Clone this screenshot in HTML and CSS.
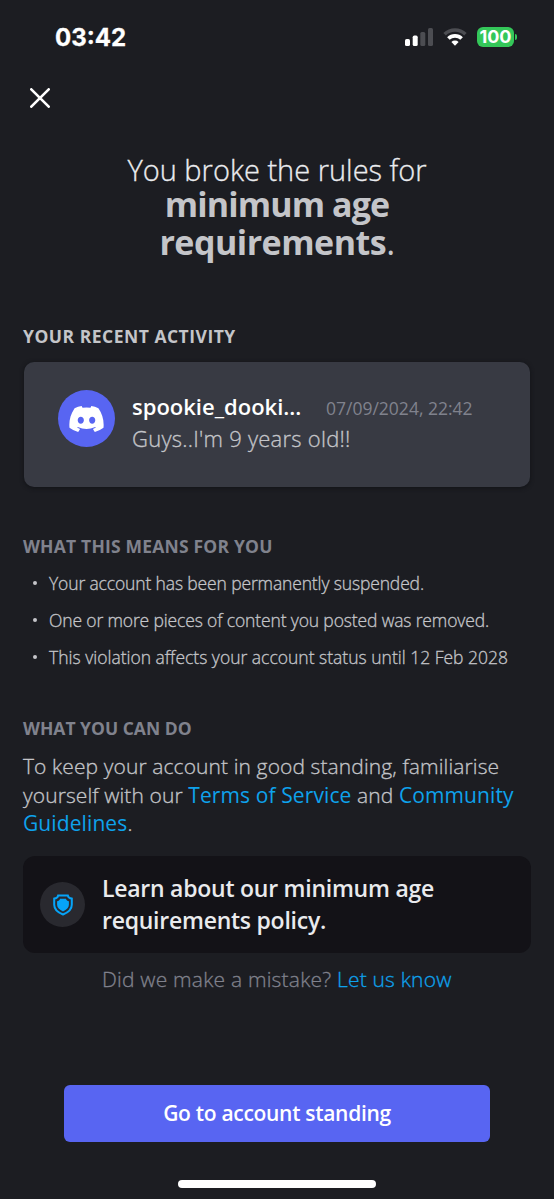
FILE: index.html
```html
<!DOCTYPE html>
<html lang="en">
<head>
    <meta charset="UTF-8">
    <title>Account standing</title>
    <link rel="stylesheet" href="styles.css">
</head>
<body>
<div class="status-bar">
    <span class="time">03:42</span>
    <div class="status-icons">
        <svg class="signal" width="28" height="18" viewBox="0 0 28 18">
            <rect x="0" y="11" width="5" height="7" rx="1.6" fill="#fff"/>
            <rect x="7.7" y="7.6" width="5" height="10.4" rx="1.6" fill="#fff"/>
            <rect x="15.3" y="4" width="5" height="14" rx="1.6" fill="#4c4d52"/>
            <rect x="23" y="0" width="5" height="18" rx="1.6" fill="#4c4d52"/>
        </svg>
        <svg class="wifi" width="24" height="18" viewBox="0 0 24 18">
            <path d="M1.6 6.3a14.8 14.8 0 0 1 20.8 0" fill="none" stroke="#4c4d52" stroke-width="3.6"/>
            <path d="M5.4 10.6a9.3 9.3 0 0 1 13.2 0" fill="none" stroke="#fff" stroke-width="3.6"/>
            <path d="M12 17.8l-3.6-3.7a5.1 5.1 0 0 1 7.2 0z" fill="#fff"/>
        </svg>
        <div class="battery">
            <span class="battery-level">100</span>
            <span class="battery-tip"></span>
        </div>
    </div>
</div>

<div class="nav">
    <svg class="close" width="20" height="20" viewBox="0 0 20 20">
        <path d="M1.3 1.3l17.4 17.4M18.7 1.3L1.3 18.7" stroke="#fff" stroke-width="2.6" stroke-linecap="round"/>
    </svg>
</div>

<div class="content">
    <h1 class="title">
        <span class="title-line">You broke the rules for</span>
        <b class="title-age">minimum age</b>
        <b class="title-req">requirements<i>.</i></b>
    </h1>

    <h2 class="label label-activity">YOUR RECENT ACTIVITY</h2>
    <div class="message">
        <div class="avatar">
            <svg width="35" height="26" viewBox="0 0 127.14 96.36">
                <path fill="#fff" d="M107.7 8.07A105.15 105.15 0 0 0 81.47 0a72.06 72.06 0 0 0-3.36 6.83 97.68 97.68 0 0 0-29.11 0A72.37 72.37 0 0 0 45.64 0a105.89 105.89 0 0 0-26.25 8.09C2.79 32.65-1.71 56.6.54 80.21a105.73 105.73 0 0 0 32.17 16.15 77.7 77.7 0 0 0 6.89-11.11 68.42 68.42 0 0 1-10.85-5.18c.91-.66 1.8-1.34 2.66-2a75.57 75.57 0 0 0 64.32 0c.87.71 1.76 1.39 2.66 2a68.68 68.68 0 0 1-10.87 5.19 77 77 0 0 0 6.89 11.1 105.25 105.25 0 0 0 32.19-16.14c2.64-27.38-4.51-51.11-18.9-72.15zM42.45 65.69C36.18 65.69 31 60 31 53s5-12.74 11.43-12.74S54 46 53.89 53s-5.05 12.69-11.44 12.69zm42.24 0C78.41 65.69 73.25 60 73.25 53s5-12.74 11.44-12.74S96.23 46 96.12 53s-5.04 12.69-11.43 12.69z"/>
            </svg>
        </div>
        <div class="message-body">
            <div class="message-head">
                <span class="username">spookie_dooki...</span>
                <span class="date">07/09/2024, 22:42</span>
            </div>
            <p class="message-text">Guys..I'm 9 years old!!</p>
        </div>
    </div>

    <h2 class="label label-means">WHAT THIS MEANS FOR YOU</h2>
    <ul class="effects">
        <li>Your account has been permanently suspended.</li>
        <li>One or more pieces of content you posted was removed.</li>
        <li class="until">This violation affects your account status until 12 Feb 2028</li>
    </ul>

    <h2 class="label">WHAT YOU CAN DO</h2>
    <p class="advice">To keep your account in good standing, familiarise<br>
        yourself with our <a>Terms of Service</a> and <a>Community<br>
        Guidelines</a>.</p>

    <div class="policy">
        <div class="policy-icon">
            <svg width="22" height="22" viewBox="0 0 22 22">
                <path d="M6.2 1.4h9.6c.3 1.9 1.7 3 4 3.2v6.2c0 4.4-3.6 7.7-8.8 9.7C5.8 18.5 2.2 15.2 2.2 10.8V4.6c2.3-.2 3.700-1.300 4-3.200z" fill="none" stroke="#06a4f8" stroke-width="2"/>
                <path d="M8.1 4.8h5.8c.6 1.4 1.5 2.2 3 2.5v3.5c0 3-2.3 5-5.9 6.6-3.6-1.6-5.9-3.6-5.9-6.6V7.3c1.5-.3 2.4-1.1 3-2.5z" fill="#06a4f8"/>
            </svg>
        </div>
        <p class="policy-text">Learn about our minimum age<br>requirements policy.</p>
    </div>
    <p class="mistake">Did we make a mistake? <a>Let us know</a></p>
</div>

<button class="standing">Go to account standing</button>
<div class="home-bar"></div>
</body>
</html>
```

FILE: styles.css
```css
* {
    box-sizing: border-box;
    margin: 0;
    padding: 0;
}

body {
    display: flex;
    flex-direction: column;
    height: 1199px;
    background-color: #1c1d22;
    color: #c4c5c9;
    font-family: "Open Sans", "Noto Sans", sans-serif;
    font-weight: 300;
    white-space: nowrap;
    overflow: hidden;
}

a {
    color: #0ea2ec;
}

/* a little heavier than the light weight */
.title-line,
.message-text,
.effects,
.advice,
.mistake {
    -webkit-text-stroke: 0.3px;
}

/* status bar */
.status-bar {
    display: flex;
    justify-content: space-between;
    align-items: center;
    height: 74px;
    padding: 0 37px 0 55px;
}

.time {
    font-family: Inter, sans-serif;
    font-size: 24px;
    font-weight: 700;
    color: #fff;
    -webkit-text-stroke: 0.3px;
}

.status-icons {
    display: flex;
    align-items: center;
}

.wifi {
    margin: 0 10px 0 10px;
}

.battery {
    display: flex;
    align-items: center;
}

.battery-level {
    width: 37px;
    height: 20px;
    border-radius: 6px;
    background-color: #34c759;
    color: #fff;
    font-family: Inter, sans-serif;
    font-size: 18px;
    font-weight: 700;
    line-height: 20px;
    text-align: center;
}

.battery-tip {
    width: 2px;
    height: 6px;
    margin-left: 1px;
    border-radius: 0 2px 2px 0;
    background-color: #34c759;
}

.nav {
    height: 78px;
    padding: 14px 30px;
}

.close {
    display: block;
}

.content {
    flex: 1;
    padding: 0 23px;
}

/* title */
.title {
    height: 172px;
    text-align: center;
    font-weight: 300;
}

.title-line,
.title b {
    display: block;
}

.title-line {
    height: 34px;
    font-size: 29px;
    line-height: 35px;
    color: #ebecef;
}

.title b {
    height: 38px;
    font-size: 34px;
    line-height: 37px;
    font-weight: 700;
}

.title .title-age {
    letter-spacing: -0.9px;
}

.title .title-req {
    letter-spacing: -0.5px;
}

.title i {
    font-style: normal;
    font-weight: 400;
}

/* section labels */
.label {
    height: 24px;
    font-size: 17.5px;
    line-height: 24px;
    font-weight: 700;
    color: #80828d;
}

.label-activity {
    letter-spacing: 0.5px;
    color: #c4c5c9;
}

.label-means {
    letter-spacing: 0.2px;
}

/* message card */
.message {
    display: flex;
    height: 125px;
    margin: 14px 1px 47px;
    padding: 28px 34px;
    border-radius: 10px;
    background-color: #383a43;
    box-shadow: 0 1px 4px #111216;
}

.avatar {
    display: flex;
    align-items: center;
    justify-content: center;
    width: 57px;
    height: 57px;
    margin-right: 17px;
    border-radius: 50%;
    background-color: #5865f2;
}

.message-body {
    margin-top: -1px;
}

.message-head {
    display: flex;
    align-items: baseline;
    height: 32px;
}

.username {
    width: 194px;
    font-size: 22px;
    line-height: 34px;
    font-weight: 600;
    color: #fff;
}

.date {
    font-size: 17.5px;
    font-weight: 400;
    color: #80828d;
}

.message-text {
    font-size: 22px;
    line-height: 34px;
    letter-spacing: 0.25px;
}

/* effects */
.effects {
    height: 145px;
    margin-bottom: 13px;
    padding-top: 6px;
    list-style: none;
}

.effects li {
    display: flex;
    align-items: center;
    height: 37px;
    font-size: 17.5px;
    letter-spacing: -0.14px;
}

.effects .until {
    letter-spacing: 0;
}

.effects li::before {
    content: "";
    width: 4px;
    height: 4px;
    margin: 0 12px 0 10px;
    border-radius: 50%;
    background-color: #c4c5c9;
}

.advice {
    height: 86px;
    margin: 12px 0 18px;
    font-size: 21px;
    line-height: 28.5px;
    letter-spacing: 0.1px;
}

.advice a {
    font-weight: 500;
    -webkit-text-stroke: 0;
}

/* policy */
.policy {
    display: flex;
    align-items: center;
    height: 97px;
    padding: 0 17px;
    border-radius: 12px;
    background-color: #131217;
}

.policy-icon {
    display: flex;
    align-items: center;
    justify-content: center;
    width: 45px;
    height: 45px;
    margin-right: 17px;
    border-radius: 50%;
    background-color: #29292f;
}

.policy-text {
    margin-top: -1px;
    font-size: 23px;
    line-height: 32px;
    font-weight: 600;
    letter-spacing: -0.25px;
    color: #e9eaed;
}

.mistake {
    padding: 10px 0 0 79px;
    font-size: 21px;
    line-height: 32px;
    letter-spacing: 0.2px;
    color: #80828d;
}

.standing {
    width: 426px;
    height: 57px;
    margin: 0 auto 38px;
    padding-bottom: 2px;
    border: none;
    border-radius: 6px;
    background-color: #5865f2;
    color: #fff;
    font-family: inherit;
    font-size: 21px;
    font-weight: 600;
    letter-spacing: -0.3px;
}

.home-bar {
    flex: none;
    width: 198px;
    height: 8px;
    margin: 0 auto 11px;
    border-radius: 4px;
    background-color: #fff;
}
```
